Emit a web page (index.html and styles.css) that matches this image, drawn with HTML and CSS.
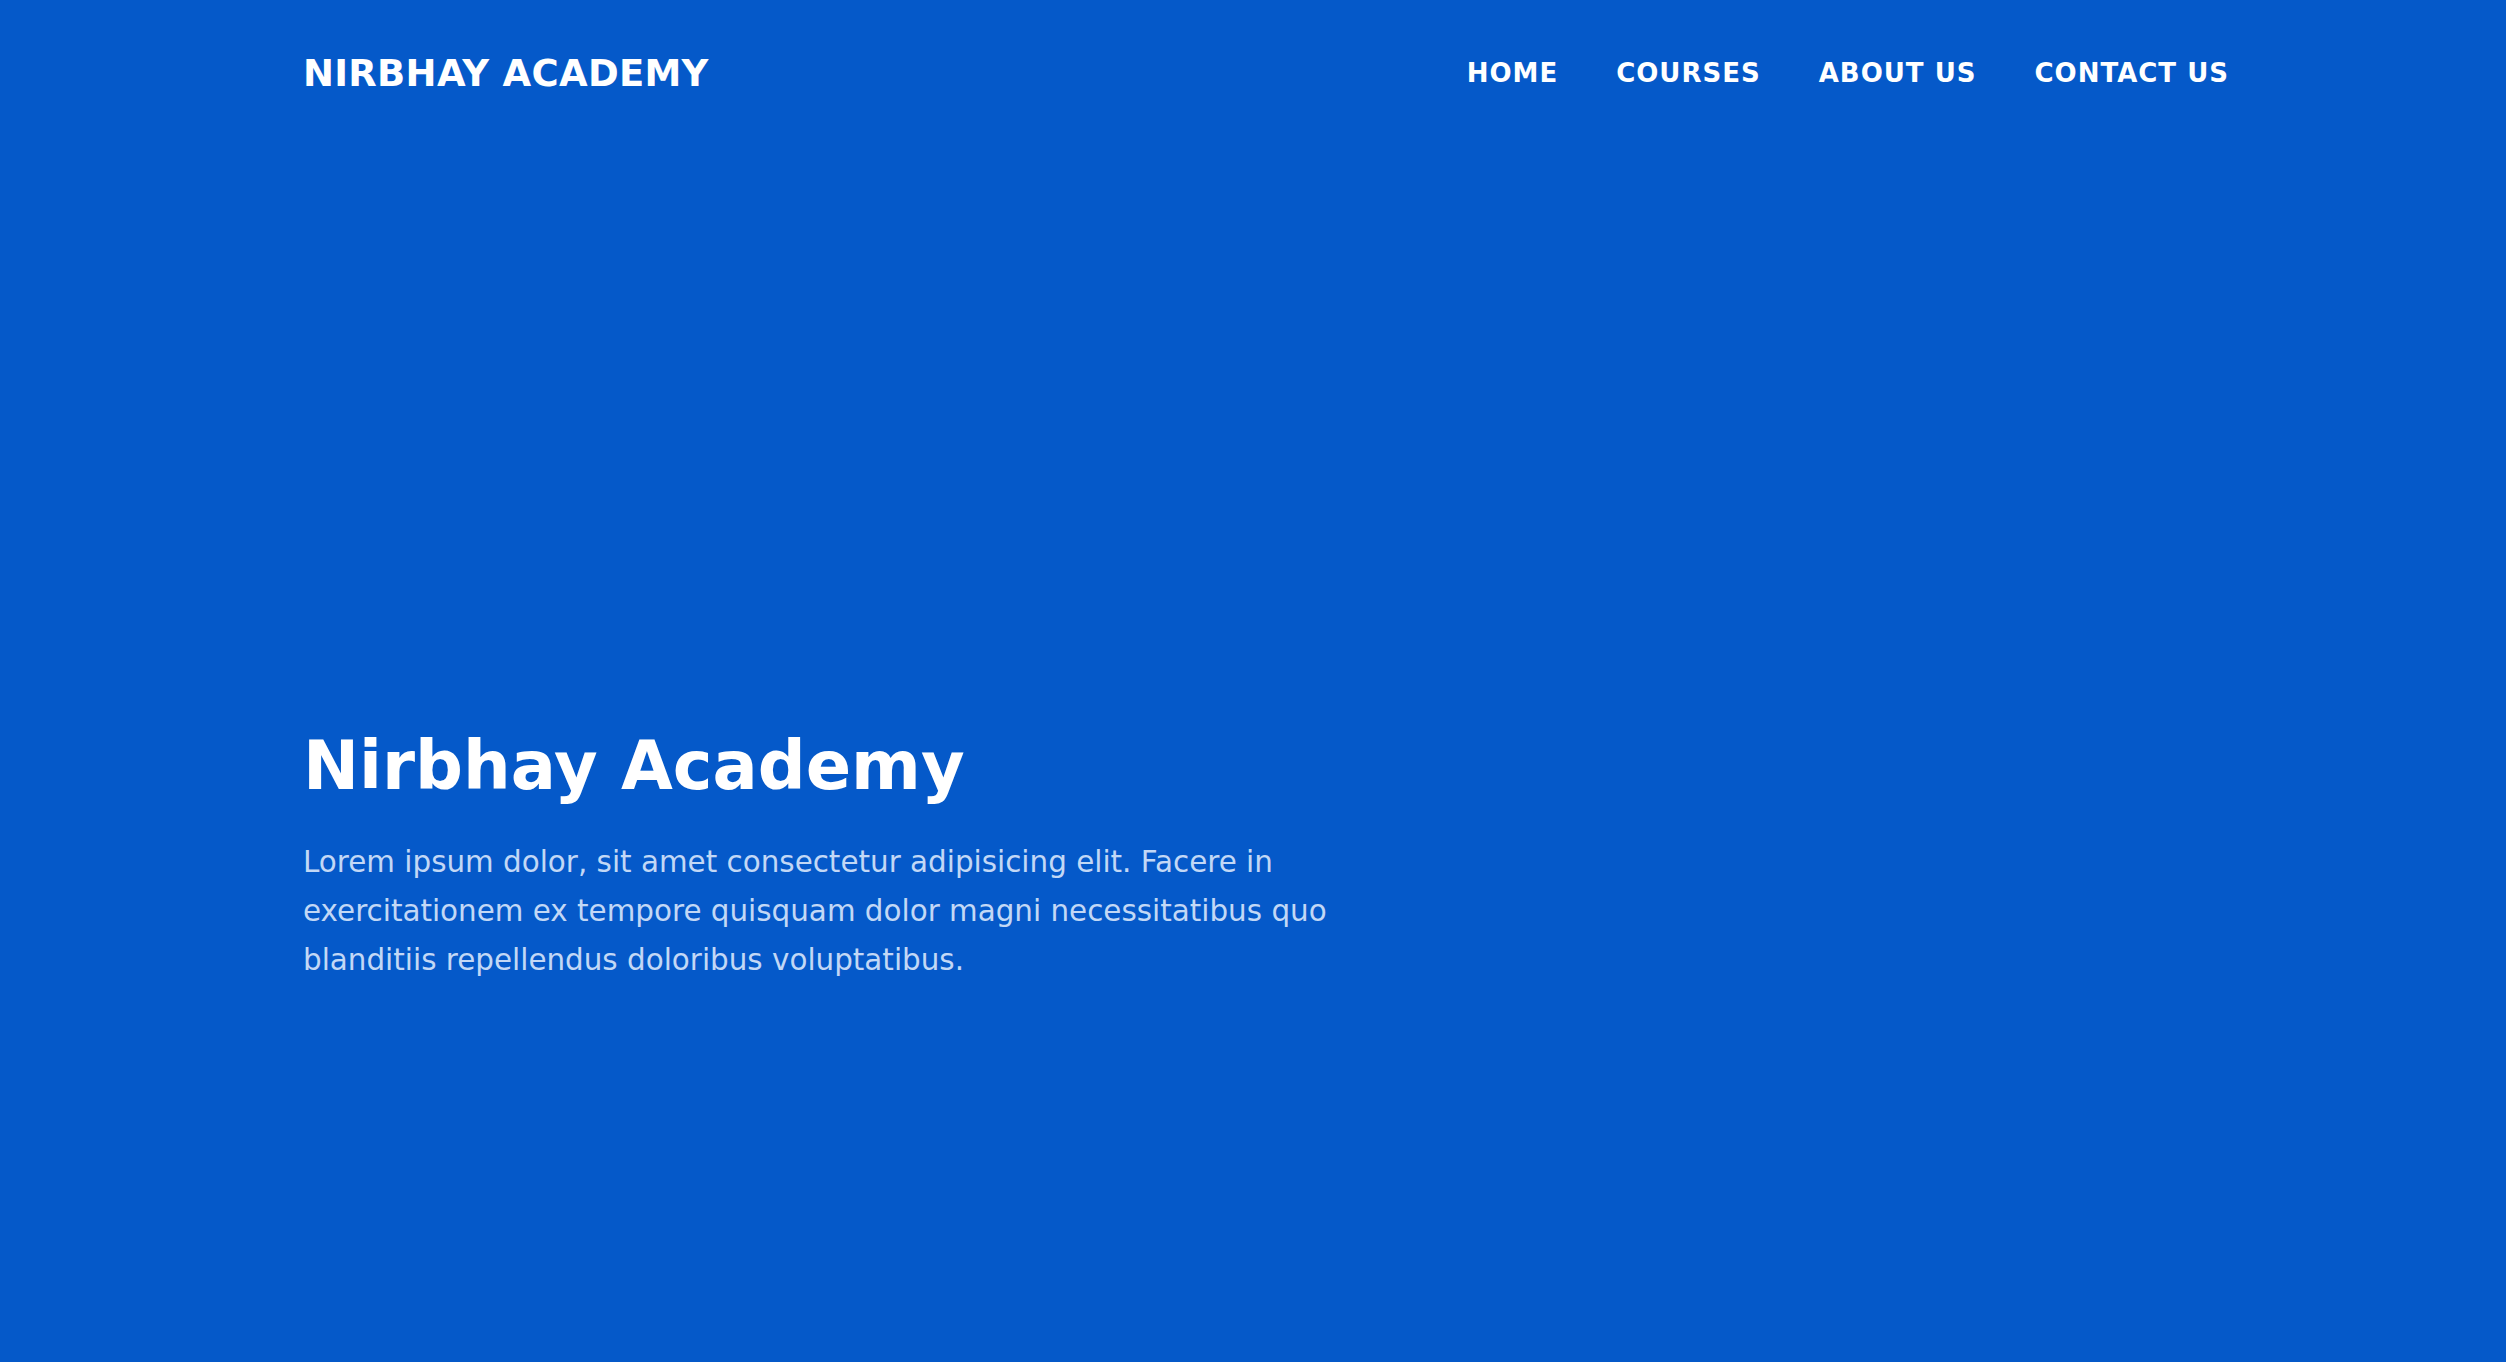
FILE: index.html
```html
<!DOCTYPE html>
<html lang="en">
<head>
<meta charset="utf-8">
<title>Nirbhay Academy</title>
<link rel="stylesheet" href="styles.css">
</head>
<body>
<header class="site-header">
  <a class="logo" href="#">NIRBHAY ACADEMY</a>
  <nav class="nav">
    <a href="#">HOME</a>
    <a href="#">COURSES</a>
    <a href="#">ABOUT US</a>
    <a href="#">CONTACT US</a>
  </nav>
</header>
<main class="hero">
  <h1 class="hero-title">Nirbhay Academy</h1>
  <p class="hero-text">Lorem ipsum dolor, sit amet consectetur adipisicing elit. Facere in exercitationem ex tempore quisquam dolor magni necessitatibus quo blanditiis repellendus doloribus voluptatibus.</p>
</main>
</body>
</html>
```
FILE: styles.css
```css
* { box-sizing: border-box; }
html, body { margin: 0; padding: 0; }
body {
  background: #0559c9;
  color: #fff;
  font-family: "DejaVu Sans", "Open Sans", sans-serif;
  min-height: 100vh;
}
a { color: inherit; text-decoration: none; }

.site-header {
  height: 146px;
  display: flex;
  align-items: center;
  justify-content: space-between;
  padding: 0 277px 0 303px;
}
.logo {
  font-size: 37px;
  font-weight: 700;
  letter-spacing: 0.3px;
  line-height: 1;
}
.nav {
  display: flex;
  gap: 58px;
}
.nav a {
  font-size: 26px;
  font-weight: 700;
  letter-spacing: 1px;
  line-height: 1;
}

.hero {
  padding: 580px 0 0 303px;
}
.hero-title {
  margin: 0;
  font-size: 67px;
  font-weight: 700;
  line-height: 1.2;
}
.hero-text {
  margin: 32px 0 0;
  width: 1080px;
  font-size: 29.4px;
  line-height: 49px;
  color: rgba(230, 240, 255, 0.85);
}
```
